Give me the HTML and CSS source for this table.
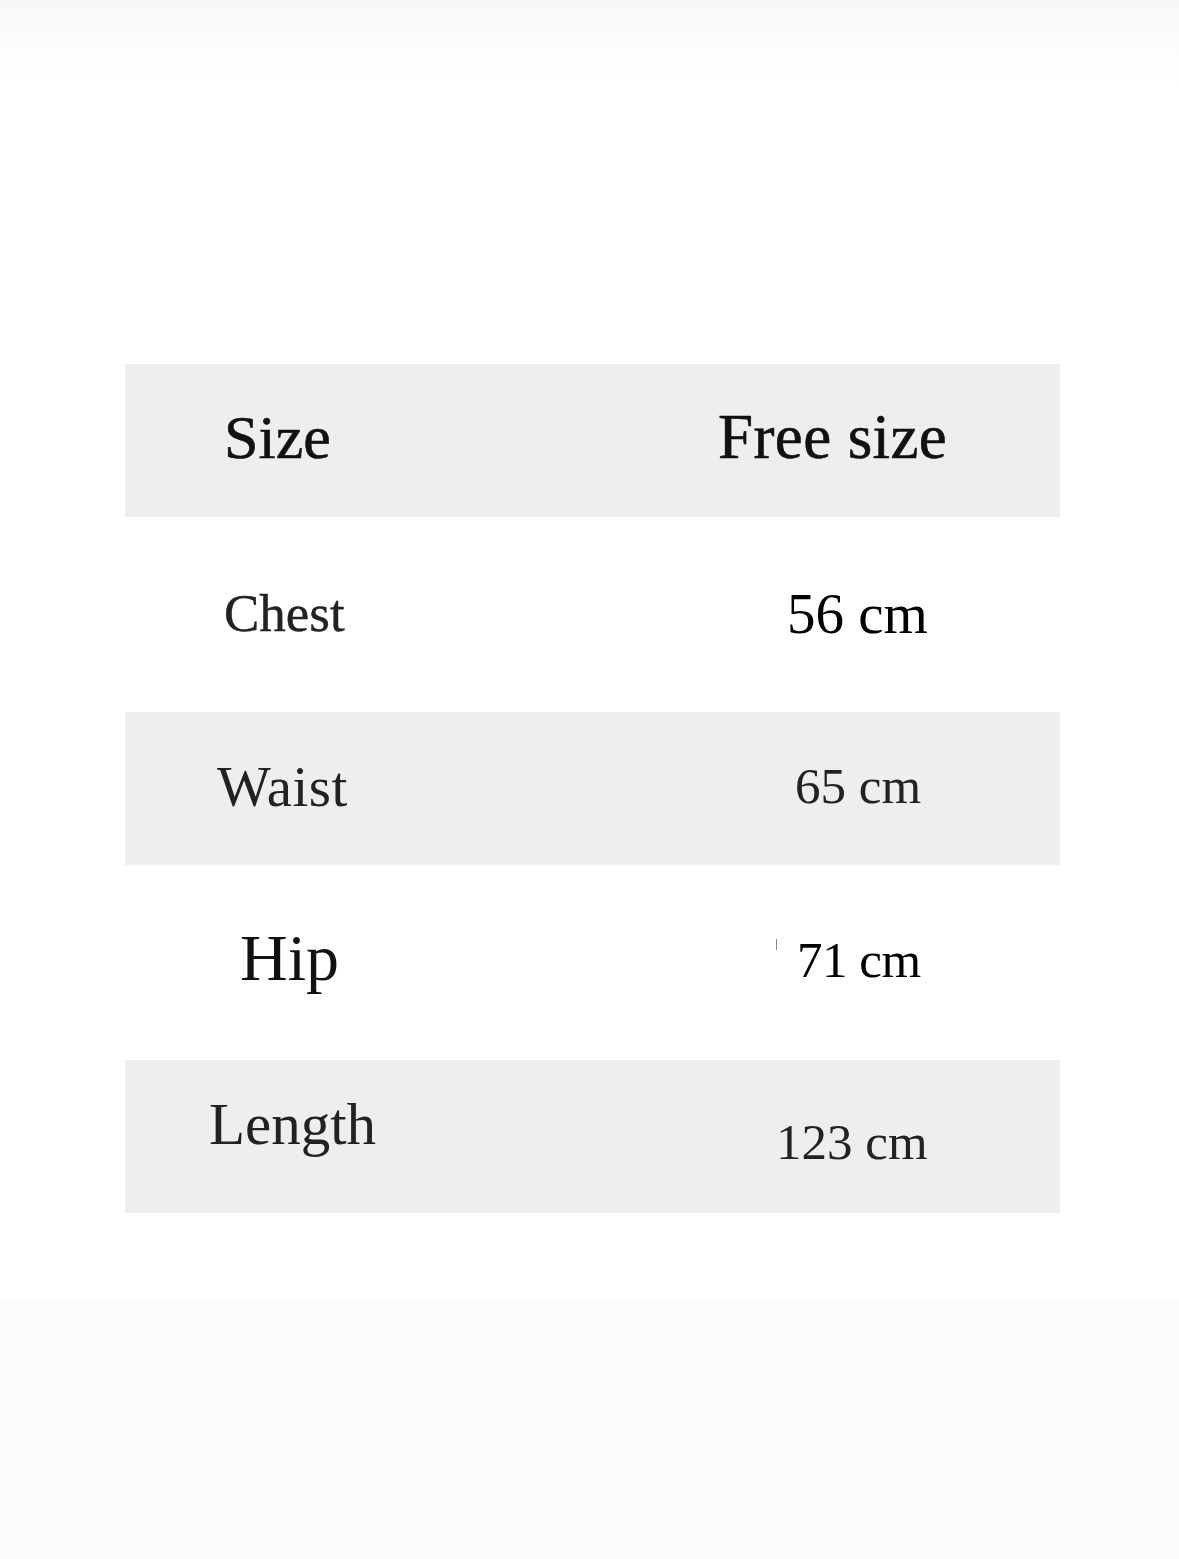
FILE: index.html
```html
<!DOCTYPE html>
<html lang="en">
<head>
<meta charset="utf-8">
<title>Size chart</title>
<link rel="stylesheet" href="styles.css">
</head>
<body>
<main class="page">
  <div class="chart">
    <div class="row shade head">
      <span class="cell c-size">Size</span>
      <span class="cell c-free">Free size</span>
    </div>
    <div class="row tall">
      <span class="cell c-chest">Chest</span>
      <span class="cell c-56">56 cm</span>
    </div>
    <div class="row shade">
      <span class="cell c-waist">Waist</span>
      <span class="cell c-65">65 cm</span>
    </div>
    <div class="row tall">
      <span class="cell c-hip">Hip</span>
      <span class="cell c-71"><i class="tick"></i>71 cm</span>
    </div>
    <div class="row shade">
      <span class="cell c-length">Length</span>
      <span class="cell c-123">123 cm</span>
    </div>
  </div>
</main>
</body>
</html>
```

FILE: styles.css
```css
html, body {
  margin: 0;
  padding: 0;
}
body {
  width: 1179px;
  height: 1559px;
  background: linear-gradient(to bottom, #f7f7f7 0px, #fafafa 28px, #fdfdfd 55px, #ffffff 85px, #ffffff 1298px, #fcfcfc 1302px, #fcfcfc 1559px);
  font-family: "Liberation Serif", "Times New Roman", serif;
  color: #222;
}
.page {
  padding-top: 364px;
  padding-left: 125px;
}
.chart {
  width: 935px;
  display: flex;
  flex-direction: column;
}
.row {
  display: grid;
  grid-template-columns: 560px 1fr;
  align-items: start;
  height: 153px;
}
.row.tall {
  height: 195px;
}
.row.tall:first-of-type {
  height: 194px;
}
.shade {
  background: #eeeeee;
}
.cell {
  display: block;
  line-height: 1;
  white-space: nowrap;
}
.head .cell {
  -webkit-text-stroke: 0.6px #111;
}
.c-size {
  font-size: 62px;
  color: #111;
  padding-left: 99px;
  margin-top: 42px;
}
.c-free {
  font-size: 63px;
  color: #111;
  padding-left: 33px;
  margin-top: 42px;
  letter-spacing: 0.4px;
}
.c-chest {
  font-size: 53px;
  color: #222;
  padding-left: 99px;
  margin-top: 70px;
  -webkit-text-stroke: 0.4px #222;
}
.c-56 {
  font-size: 57px;
  color: #000;
  padding-left: 102px;
  margin-top: 68px;
}
.c-waist {
  font-size: 57px;
  color: #222;
  padding-left: 92px;
  margin-top: 46px;
  letter-spacing: 0.5px;
}
.c-65 {
  font-size: 51px;
  color: #222;
  padding-left: 110px;
  margin-top: 49px;
}
.c-hip {
  font-size: 66px;
  color: #111;
  padding-left: 115px;
  margin-top: 60px;
}
.c-71 {
  font-size: 51px;
  color: #000;
  padding-left: 91px;
  margin-top: 70px;
  letter-spacing: -0.5px;
}
.tick {
  display: inline-block;
  width: 1px;
  height: 11px;
  background: #888;
  margin-right: 20px;
  vertical-align: 27px;
}
.c-length {
  font-size: 59px;
  color: #222;
  padding-left: 84px;
  margin-top: 35px;
}
.c-123 {
  font-size: 51px;
  color: #222;
  padding-left: 91px;
  margin-top: 57px;
  letter-spacing: 0px;
}
```
